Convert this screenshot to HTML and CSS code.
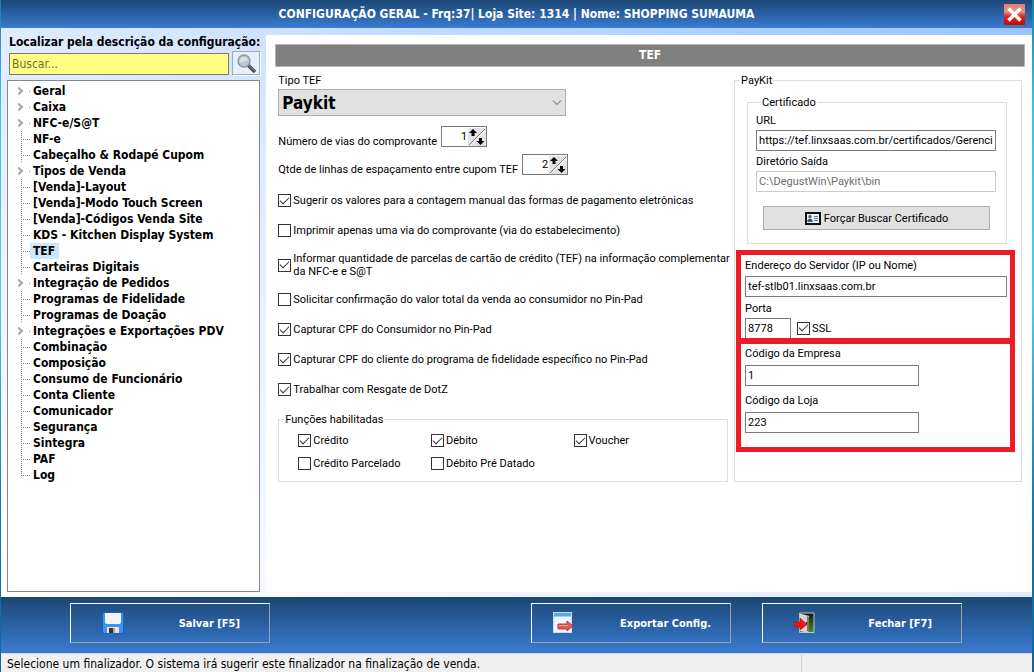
FILE: index.html
```html
<!DOCTYPE html>
<html lang="pt-BR">
<head>
<meta charset="utf-8">
<meta name="viewport" content="width=device-width, initial-scale=1">
<title>Configuração Geral</title>
<link rel="stylesheet" href="styles.css">
</head>
<body>
<div class="window">
  <header class="titlebar">
    <h1 class="title">CONFIGURAÇÃO GERAL - Frq:37| Loja Site: 1314 | Nome: SHOPPING SUMAUMA</h1>
    <button class="close" type="button" aria-label="Fechar janela">
      <svg width="21" height="21" viewBox="0 0 21 21"><defs><linearGradient id="cg" x1="0" y1="0" x2="0" y2="1"><stop offset="0" stop-color="#e87970"/><stop offset=".35" stop-color="#e6958d"/><stop offset=".6" stop-color="#d52a20"/><stop offset="1" stop-color="#c50808"/></linearGradient></defs><rect width="21" height="21" rx="1" fill="url(#cg)"/><path d="M4.500 4.500L16.500 16.500M16.500 4.500L4.500 16.500" stroke="#fff" stroke-width="3.400"/></svg>
    </button>
  </header>

  <div class="workspace">
    <aside class="sidebar">
      <label class="search-label" for="busca">Localizar pela descrição da configuração:</label>
      <div class="search">
        <input class="search-input" id="busca" type="text" placeholder="Buscar...">
        <button class="search-button" type="button" aria-label="Buscar">
          <svg width="22" height="20" viewBox="0 0 22 20"><path d="M12 11L19 18" stroke="#4b4d50" stroke-width="3.500"/><path d="M12 11L19 17" stroke="#888d92" stroke-width="1"/><circle cx="8" cy="7" r="6" fill="#b4cbd2" stroke="#929b9f" stroke-width="1.500"/><path d="M4 6Q5 3 9 3Q12 4 12 7Q8 6 4 9Z" fill="#d6e5ea"/></svg>
        </button>
      </div>
      <ul class="tree">
        <li class="node parent"><span class="node-text">Geral</span></li>
        <li class="node parent"><span class="node-text">Caixa</span></li>
        <li class="node parent"><span class="node-text">NFC-e/S@T</span></li>
        <li class="node"><span class="node-text">NF-e</span></li>
        <li class="node"><span class="node-text">Cabeçalho &amp; Rodapé Cupom</span></li>
        <li class="node parent"><span class="node-text">Tipos de Venda</span></li>
        <li class="node"><span class="node-text">[Venda]-Layout</span></li>
        <li class="node"><span class="node-text">[Venda]-Modo Touch Screen</span></li>
        <li class="node"><span class="node-text">[Venda]-Códigos Venda Site</span></li>
        <li class="node"><span class="node-text">KDS - Kitchen Display System</span></li>
        <li class="node"><span class="node-text selected">TEF</span></li>
        <li class="node"><span class="node-text">Carteiras Digitais</span></li>
        <li class="node parent"><span class="node-text">Integração de Pedidos</span></li>
        <li class="node"><span class="node-text">Programas de Fidelidade</span></li>
        <li class="node"><span class="node-text">Programas de Doação</span></li>
        <li class="node parent"><span class="node-text">Integrações e Exportações PDV</span></li>
        <li class="node"><span class="node-text">Combinação</span></li>
        <li class="node"><span class="node-text">Composição</span></li>
        <li class="node"><span class="node-text">Consumo de Funcionário</span></li>
        <li class="node"><span class="node-text">Conta Cliente</span></li>
        <li class="node"><span class="node-text">Comunicador</span></li>
        <li class="node"><span class="node-text">Segurança</span></li>
        <li class="node"><span class="node-text">Sintegra</span></li>
        <li class="node"><span class="node-text">PAF</span></li>
        <li class="node last"><span class="node-text">Log</span></li>
      </ul>
    </aside>

    <main class="panel">
      <h2 class="panel-title">TEF</h2>
      <div class="form">
        <section class="general">
          <label class="caption" for="tipo">Tipo TEF</label>
          <div class="select-box">
            <select class="select" id="tipo"><option>Paykit</option></select>
            <svg class="chevron" width="10" height="6" viewBox="0 0 10 6"><path d="M1 .5L5 4.500L9 .5" fill="none" stroke="#555"/></svg>
          </div>
          <div class="number-row">
            <label for="vias">Número de vias do comprovante</label>
            <span class="spinner"><input class="spinner-input" id="vias" type="text" inputmode="numeric" value="1"><svg class="spin-icon" width="18" height="18" viewBox="0 0 18 18"><path d="M0 0H18V18H0Z" fill="#e3e3e3"/><path d="M1 17L17 1" stroke="#777"/><path d="M2 17.500L17.500 2" stroke="#fff"/><path d="M5 1L9 5H6.500V8H3.500V5H1Z M12.500 17L8.500 13H11V10H14V13H16.500Z"/></svg></span>
          </div>
          <div class="number-row">
            <label for="linhas">Qtde de linhas de espaçamento entre cupom TEF</label>
            <span class="spinner"><input class="spinner-input" id="linhas" type="text" inputmode="numeric" value="2"><svg class="spin-icon" width="18" height="18" viewBox="0 0 18 18"><path d="M0 0H18V18H0Z" fill="#e3e3e3"/><path d="M1 17L17 1" stroke="#777"/><path d="M2 17.500L17.500 2" stroke="#fff"/><path d="M5 1L9 5H6.500V8H3.500V5H1Z M12.500 17L8.500 13H11V10H14V13H16.500Z"/></svg></span>
          </div>
          <div class="options">
            <label class="check"><input class="box" type="checkbox" checked><span>Sugerir os valores para a contagem manual das formas de pagamento eletrônicas</span></label>
            <label class="check"><input class="box" type="checkbox"><span>Imprimir apenas uma via do comprovante (via do estabelecimento)</span></label>
            <label class="check two-line"><input class="box" type="checkbox" checked><span>Informar quantidade de parcelas de cartão de crédito (TEF) na informação complementar<br>da NFC-e e S@T</span></label>
            <label class="check"><input class="box" type="checkbox"><span>Solicitar confirmação do valor total da venda ao consumidor no Pin-Pad</span></label>
            <label class="check"><input class="box" type="checkbox" checked><span>Capturar CPF do Consumidor no Pin-Pad</span></label>
            <label class="check"><input class="box" type="checkbox" checked><span>Capturar CPF do cliente do programa de fidelidade específico no Pin-Pad</span></label>
            <label class="check"><input class="box" type="checkbox" checked><span>Trabalhar com Resgate de DotZ</span></label>
          </div>
          <fieldset class="group functions">
            <legend>Funções habilitadas</legend>
            <div class="function-grid">
              <label class="check"><input class="box" type="checkbox" checked><span>Crédito</span></label>
              <label class="check"><input class="box" type="checkbox" checked><span>Débito</span></label>
              <label class="check"><input class="box" type="checkbox" checked><span>Voucher</span></label>
              <label class="check"><input class="box" type="checkbox"><span>Crédito Parcelado</span></label>
              <label class="check"><input class="box" type="checkbox"><span>Débito Pré Datado</span></label>
            </div>
          </fieldset>
        </section>

        <fieldset class="group paykit">
          <legend>PayKit</legend>
          <fieldset class="group certificate">
            <legend>Certificado</legend>
            <label class="caption" for="url">URL</label>
            <input class="field" id="url" type="text" value="https://tef.linxsaas.com.br/certificados/Gerencia">
            <label class="caption spaced" for="dir">Diretório Saída</label>
            <input class="field" id="dir" type="text" value="C:\DegustWin\Paykit\bin" disabled>
            <button class="cert-button" type="button">
              <svg width="16" height="13" viewBox="0 0 16 13"><rect x="1" y="1" width="14" height="11" fill="#e9f4ff" stroke="#111" stroke-width="2"/><circle cx="5" cy="4.500" r="1.700" fill="#8c5a38"/><path d="M2.500 10V8Q5 5 7.500 8V10Z" fill="#34518a"/><path d="M9 4.500H13M9 6.500H13M9 8.500H13" stroke="#5b7896"/></svg>
              Forçar Buscar Certificado
            </button>
          </fieldset>
          <div class="marked server">
            <label class="caption" for="host">Endereço do Servidor (IP ou Nome)</label>
            <input class="field" id="host" type="text" value="tef-stlb01.linxsaas.com.br">
            <label class="caption port-caption" for="porta">Porta</label>
            <div class="port-row">
              <input class="field port" id="porta" type="text" value="8778">
              <label class="check"><input class="box" type="checkbox" checked><span>SSL</span></label>
            </div>
          </div>
          <div class="marked store">
            <label class="caption" for="empresa">Código da Empresa</label>
            <input class="field code" id="empresa" type="text" value="1">
            <label class="caption" for="loja">Código da Loja</label>
            <input class="field code" id="loja" type="text" value="223">
          </div>
        </fieldset>
      </div>
    </main>
  </div>

  <footer class="actions">
    <button class="action save" type="button">
      <svg width="22" height="22" viewBox="0 0 22 22"><rect x=".5" y=".5" width="21" height="21" rx="2" fill="#3c93f0" stroke="#1861bf"/><path d="M3 1H19V10Q19 12 17 12H5Q3 12 3 10Z" fill="#f1f3f6"/><rect x="5" y="15" width="12" height="6" fill="#e9e6e0"/><rect x="7" y="16" width="4" height="5" fill="#333"/><path d="M11 16H13V21H11Z" fill="#aaa"/></svg>
      <span>Salvar [F5]</span>
    </button>
    <button class="action export" type="button">
      <svg width="21" height="22" viewBox="0 0 21 22"><rect x=".5" y=".5" width="18" height="20" fill="#edf4fd" stroke="#c6dcf3"/><path d="M1 1H18V4.500H1Z" fill="#5ea4e6"/><path d="M5 12H14V9L20 14L14 19V17H5Z" fill="#e15656" stroke="#b93c44"/><path d="M6 13.500H15" stroke="#f59b98"/></svg>
      <span>Exportar Config.</span>
    </button>
    <button class="action exit" type="button">
      <svg width="21" height="22" viewBox="0 0 21 22"><defs><linearGradient id="dg" x1="0" y1="0" x2="0" y2="1"><stop offset="0" stop-color="#111b13"/><stop offset="1" stop-color="#4d8a27"/></linearGradient></defs><path d="M5.500 1H20V20.500H5.500Z" fill="url(#dg)" stroke="#bdc5b9"/><path d="M6 1.500L15 4V21L6 19Z" fill="#d3d5d2"/><path d="M13 4L15 5V20L13 19Z" fill="#777"/><path d="M12.500 10V13" stroke="#222"/><path d="M0 10H6V6L13 12.500L6 18V15H0Z" fill="#ed1515" stroke="#b90a0a" stroke-width=".6"/></svg>
      <span>Fechar [F7]</span>
    </button>
  </footer>
  <div class="status"><span class="status-text">Selecione um finalizador. O sistema irá sugerir este finalizador na finalização de venda.</span><span class="status-cell"></span></div>
</div>
</body>
</html>
```
FILE: styles.css
```css
*, *::before { box-sizing: border-box; }

body {
  margin: 0;
  font: 11px/13px Tahoma, "DejaVu Sans Condensed", "Noto Sans", sans-serif;
  color: #000;
}

input, button, select { font: inherit; color: inherit; margin: 0; border-radius: 0; }
h1, h2 { margin: 0; font-size: 12px; font-weight: bold; }
svg { display: block; flex: none; }

.window {
  min-height: 100vh;
  display: flex;
  flex-direction: column;
  padding: 0 2px 0 1px;
  background: linear-gradient(#1b7f9f, #3cc1e6 15%, #55c8ee 45%, #147ab0 75%, #0d6796);
}

.titlebar {
  display: flex;
  align-items: center;
  height: 28px;
  padding: 1px 7px 0 28px;
  background: linear-gradient(#1b4773, #3a7bd3);
  color: #fff;
}
.title { flex: 1; text-align: center; }
.close { padding: 0; border: 0; background: none; }

.workspace {
  flex: 1;
  display: flex;
  gap: 6px;
  padding: 7px 0 5px 6px;
  background: linear-gradient(to top right, #fff, #dfecff 50%, #98c4ff);
}

.sidebar { flex: 0 0 253px; display: flex; flex-direction: column; }
.search-label { font-size: 12px; font-weight: bold; line-height: 15px; padding-left: 2px; white-space: nowrap; }
.search { display: flex; gap: 3px; align-items: center; padding-left: 2px; margin: 1px -1px 4px 0; }
.search-input {
  flex: 1;
  min-width: 0;
  height: 22px;
  padding: 0 2px;
  font-size: 12px;
  background: #ffff80;
  border: 1px solid #7a7a7a;
}
.search-input::placeholder { color: #6d6d4c; opacity: 1; }
.search-button {
  width: 29px;
  height: 25px;
  padding: 0;
  display: grid;
  place-items: center;
  background: #e4efff;
  border: 1px solid;
  border-color: #a9a9a9 #fff #fff #a9a9a9;
  box-shadow: inset -1px -1px #a9a9a9;
}

.tree {
  flex: 1;
  margin: 0;
  padding: 2px 0 0 13px;
  list-style: none;
  background: #fff;
  border: 1px solid #828790;
  font-size: 12px;
  font-weight: bold;
  line-height: 16px;
}
.node {
  display: flex;
  height: 16px;
  background:
    repeating-linear-gradient(to bottom, #808080 0 1px, transparent 1px 2px) 0 0 / 1px 100% no-repeat,
    repeating-linear-gradient(to right, #808080 0 1px, transparent 1px 2px) 0 8px / 9px 1px no-repeat;
}
.node.last {
  background:
    repeating-linear-gradient(to bottom, #808080 0 1px, transparent 1px 2px) 0 0 / 1px 8px no-repeat,
    repeating-linear-gradient(to right, #808080 0 1px, transparent 1px 2px) 0 8px / 9px 1px no-repeat;
}
.node.parent { background: linear-gradient(#808080, #808080) 8px 8px / 1px 1px no-repeat; }
.node.parent::before {
  content: "";
  width: 6px;
  height: 6px;
  margin: 5px 5px 0 -5px;
  border: solid #a6a6a6;
  border-width: 2px 2px 0 0;
  transform: rotate(45deg);
}
.node.parent .node-text { margin-left: 3px; }
.node-text { margin-left: 9px; padding: 0 4px 0 3px; white-space: nowrap; }
.selected { background: #cce8ff; }

.panel { flex: 1; min-width: 0; padding: 9px 7px 9px 9px; background: #fff; }
.panel-title {
  height: 23px;
  line-height: 21px;
  text-align: center;
  color: #fff;
  background: #808080;
  border: 1px solid #b4b4b4;
}
.form {
  display: grid;
  grid-template-columns: minmax(0, 450fr) minmax(0, 288fr);
  gap: 6px;
  padding: 7px 3px 0;
  font-family: Tahoma, Roboto, sans-serif;
}
.caption { display: block; white-space: nowrap; }

.select-box { display: grid; width: 288px; max-width: 100%; margin: 2px 0 10px; align-items: center; }
.select {
  grid-area: 1 / 1;
  height: 27px;
  padding: 0 3px;
  appearance: none;
  background: #e1e1e1;
  border: 1px solid #adadad;
  font-family: Tahoma, "DejaVu Sans Condensed", sans-serif;
  font-size: 17px;
  font-weight: bold;
  line-height: 24px;
}
.chevron { grid-area: 1 / 1; justify-self: end; margin-right: 4px; pointer-events: none; }

.number-row { display: flex; align-items: center; gap: 4px; height: 21px; margin-bottom: 7px; white-space: nowrap; }
.number-row label { padding-top: 9px; }
.spinner { display: flex; align-items: center; width: 46px; height: 21px; border: 1px solid #7a7a7a; background: #fff; }
.spinner-input { flex: 1; width: 0; height: 18px; padding: 0 1px; border: 0; background: none; text-align: right; }

.options { display: flex; flex-direction: column; gap: 17px; margin: 19px 0 17px; }
.check { display: flex; align-items: center; gap: 2px; white-space: nowrap; }
.two-line { margin: -2px 0; }
.box {
  flex: none;
  width: 13px;
  height: 13px;
  appearance: none;
  display: grid;
  place-items: center;
  background: #fff;
  border: 1px solid #333;
}
.box:checked::before {
  content: "";
  width: 9px;
  height: 5px;
  margin-bottom: 3px;
  border: solid #333;
  border-width: 0 0 1px 1px;
  transform: rotate(-45deg);
}

.group { min-width: 0; margin: 0; padding: 0; border: 1px solid #dcdcdc; }
.group > legend { margin-left: 5px; padding: 0 1px; }
.function-grid {
  display: grid;
  grid-template-columns: 133fr 143fr 154fr;
  gap: 10px 0;
  padding: 8px 0 11px 19px;
}

.certificate { margin: 9px 14px 6px 12px; padding: 5px 10px 13px 8px; }
.field {
  display: block;
  width: 100%;
  height: 21px;
  padding: 0 2px;
  background: #fff;
  border: 1px solid #7a7a7a;
}
.field:disabled { color: #6d6d6d; border-color: #ccc; }
.certificate .caption { margin-bottom: 3px; }
.certificate .spaced { margin-top: 4px; }
.cert-button {
  display: flex;
  align-items: center;
  justify-content: center;
  gap: 3px;
  width: calc(100% - 13px);
  height: 24px;
  margin: 14px 0 0 7px;
  padding: 0;
  background: #e1e1e1;
  border: 1px solid #adadad;
}

.marked { margin: 0 6px 0 1px; border: 5px solid #ed1c24; }
.server { padding: 4px 3px 0 4px; }
.server .caption { margin-bottom: 4px; }
.server .port-caption { margin: 5px 0 3px; }
.port-row { display: flex; gap: 6px; height: 20px; align-items: center; overflow: hidden; }
.port { width: 46px; border-bottom: 0; height: 20px; }
.store { border-top-width: 1px; padding: 3px 3px 6px 4px; }
.code { width: 174px; margin: 5px 0 8px; }
.paykit { padding-bottom: 28px; }

.actions {
  display: flex;
  gap: 31px;
  height: 56px;
  padding: 6px 70px 10px 69px;
  background: linear-gradient(#1b4773, #3a7bd3);
}
.action {
  flex: 0 1 200px;
  display: flex;
  align-items: center;
  justify-content: space-between;
  padding: 0 29px 0 31px;
  background: none;
  border: 1px solid;
  border-color: #fff #a0a0a0 #a0a0a0 #fff;
  color: #fff;
  font-weight: bold;
  white-space: nowrap;
}
.save { margin-right: auto; }
.export { padding: 0 19px 0 21px; }

.status {
  display: flex;
  height: 19px;
  background: #f0f0f0;
  border-top: 1px solid #d7d7d7;
  font-size: 12px;
  line-height: 20px;
}
.status-text { flex: 800; padding-left: 6px; white-space: nowrap; border-right: 1px solid #d0d0d0; }
.status-cell { flex: 232; }
```
